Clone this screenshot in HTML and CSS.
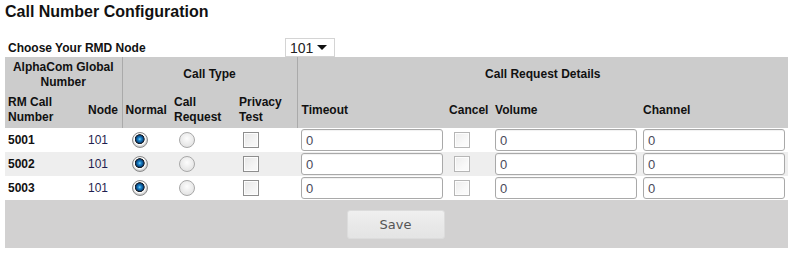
FILE: index.html
```html
<!DOCTYPE html>
<html lang="en">
<head>
  <meta charset="UTF-8">
  <title>Call Number Configuration</title>
  <link rel="stylesheet" href="styles.css">
</head>
<body>

  <h1 class="title">Call Number Configuration</h1>

  <div class="node-row">
    <label class="node-label" for="rmd-node">Choose Your RMD Node</label>
    <span class="select-wrap">
      <select id="rmd-node" class="node-select">
        <option>101</option>
      </select>
    </span>
  </div>

  <table class="config">
    <colgroup>
      <col style="width:80px">
      <col style="width:37px">
      <col style="width:49px">
      <col style="width:65px">
      <col style="width:61px">
      <col style="width:149px">
      <col style="width:46px">
      <col style="width:148px">
      <col style="width:148px">
    </colgroup>
    <thead>
      <tr class="head-top">
        <th colspan="2" class="center sep">AlphaCom Global<br>Number</th>
        <th colspan="3" class="center sep">Call Type</th>
        <th colspan="4" class="center">Call Request Details</th>
      </tr>
      <tr class="head-sub">
        <th>RM Call<br>Number</th>
        <th class="sep">Node</th>
        <th>Normal</th>
        <th>Call<br>Request</th>
        <th class="sep">Privacy<br>Test</th>
        <th class="pad-l">Timeout</th>
        <th>Cancel</th>
        <th>Volume</th>
        <th>Channel</th>
      </tr>
    </thead>
    <tbody>
      <tr>
        <td class="num">5001</td>
        <td class="node">101</td>
        <td class="pad-r"><input type="radio" name="t1" class="radio" checked></td>
        <td class="pad-r2"><input type="radio" name="t1" class="radio"></td>
        <td class="pad-c"><input type="checkbox" class="check"></td>
        <td class="pad-l"><input type="text" class="field" value="0"></td>
        <td class="pad-c2"><input type="checkbox" class="check off"></td>
        <td><input type="text" class="field" value="0"></td>
        <td><input type="text" class="field" value="0"></td>
      </tr>
      <tr class="alt">
        <td class="num">5002</td>
        <td class="node">101</td>
        <td class="pad-r"><input type="radio" name="t2" class="radio" checked></td>
        <td class="pad-r2"><input type="radio" name="t2" class="radio"></td>
        <td class="pad-c"><input type="checkbox" class="check"></td>
        <td class="pad-l"><input type="text" class="field" value="0"></td>
        <td class="pad-c2"><input type="checkbox" class="check off"></td>
        <td><input type="text" class="field" value="0"></td>
        <td><input type="text" class="field" value="0"></td>
      </tr>
      <tr>
        <td class="num">5003</td>
        <td class="node">101</td>
        <td class="pad-r"><input type="radio" name="t3" class="radio" checked></td>
        <td class="pad-r2"><input type="radio" name="t3" class="radio"></td>
        <td class="pad-c"><input type="checkbox" class="check"></td>
        <td class="pad-l"><input type="text" class="field" value="0"></td>
        <td class="pad-c2"><input type="checkbox" class="check off"></td>
        <td><input type="text" class="field" value="0"></td>
        <td><input type="text" class="field" value="0"></td>
      </tr>
    </tbody>
    <tfoot>
      <tr>
        <td colspan="9" class="foot">
          <button class="btn" type="button">Save</button>
        </td>
      </tr>
    </tfoot>
  </table>

</body>
</html>
```

FILE: styles.css
```css
body {
  font-family: "Liberation Sans", Arial, sans-serif;
  background: #fff;
  color: #111;
  margin: 0;
  padding: 0;
}

.title {
  font-size: 16px;
  font-weight: bold;
  line-height: 18px;
  margin: 0;
  padding: 3px 5px 0;
}

.node-row {
  display: flex;
  align-items: center;
  height: 19px;
  margin-top: 17px;
  padding-left: 8px;
}

.node-label {
  width: 277px;
  font-size: 12px;
  font-weight: bold;
}

.select-wrap {
  position: relative;
  display: inline-block;
}

.node-select {
  appearance: none;
  -webkit-appearance: none;
  width: 50px;
  height: 19px;
  border: 1px solid #d4d4d4;
  border-radius: 0;
  background: #fff;
  font-family: "Liberation Sans", Arial, sans-serif;
  font-size: 14px;
  color: #222;
  padding: 0 0 0 4px;
  margin: 0;
}

.select-wrap::after {
  content: "";
  position: absolute;
  right: 8px;
  top: 7px;
  border-left: 5px solid transparent;
  border-right: 5px solid transparent;
  border-top: 5px solid #111;
  pointer-events: none;
}

.config {
  margin-left: 5px;
  width: 783px;
  table-layout: fixed;
  border-collapse: collapse;
  font-size: 12px;
}

.config th {
  background: #cccccc;
  font-weight: bold;
  text-align: left;
  vertical-align: middle;
  padding: 0 3px;
  line-height: 15px;
  color: #111;
}

.config th.center {
  text-align: center;
}

.config th.sep {
  border-right: 1px solid #aaaaaa;
}

.head-top th {
  height: 35px;
}

.head-sub th {
  height: 36px;
}

.config td {
  padding: 0 3px;
  height: 24px;
  vertical-align: middle;
}

.config td.pad-l,
.config th.pad-l {
  padding-left: 4px;
}

.config td.pad-r {
  padding-left: 10px;
}

.config td.pad-r2 {
  padding-left: 8px;
}

.config td.pad-c {
  padding-left: 7px;
}

.config td.pad-c2 {
  padding-left: 8px;
}

.alt td {
  background: #eeeeee;
}

.num {
  font-weight: bold;
}

.node {
  color: #1f1f50;
}

.radio {
  appearance: none;
  -webkit-appearance: none;
  display: block;
  width: 16px;
  height: 16px;
  margin: 0;
  border: 1px solid #a8a8a8;
  border-radius: 50%;
  background: radial-gradient(circle at 50% 40%, #fdfdfd 0, #e2e2e2 80%);
}

.radio:checked {
  border-color: #8a8a8a;
  background: radial-gradient(circle at 48% 44%, #8fd4f7 0, #1c8ad0 1.5px, #0f5a9a 3px, #0b2f55 4px, #1b1b1b 4.6px, #ffffff 5.2px, #f2f2f2 6px, #cfcfcf 7px);
}

.check {
  appearance: none;
  -webkit-appearance: none;
  display: block;
  width: 16px;
  height: 16px;
  margin: 0;
  border: 1px solid #8e8e8e;
  background: linear-gradient(135deg, #e6e6e6 0, #f6f6f6 70%);
  box-shadow: inset 0 0 0 1px #fdfdfd;
}

.check.off {
  border-color: #b6b6b6;
  background: linear-gradient(135deg, #ececec 0, #fafafa 70%);
}

.field {
  display: block;
  box-sizing: border-box;
  width: 100%;
  height: 22px;
  margin: 0;
  padding: 0 4px;
  border: 1px solid #a9a9a9;
  border-radius: 3px;
  background: #fff;
  box-shadow: inset 0 1px 1px rgba(0, 0, 0, 0.06);
  font-family: "Liberation Sans", Arial, sans-serif;
  font-size: 13px;
  color: #4a4a5a;
}

.config td.foot {
  background: #d2d1d1;
  height: 48px;
  text-align: center;
  padding: 0;
}

.btn {
  width: 98px;
  height: 29px;
  margin-left: -2px;
  border: 1px solid #dcdcdc;
  border-radius: 3px;
  background: linear-gradient(#f0f0f0, #e9e9e9 50%, #e4e4e4);
  font-family: "DejaVu Sans", Verdana, sans-serif;
  font-size: 13px;
  color: #555;
  cursor: pointer;
}

.btn:hover {
  background: #e0e0e0;
}
```
